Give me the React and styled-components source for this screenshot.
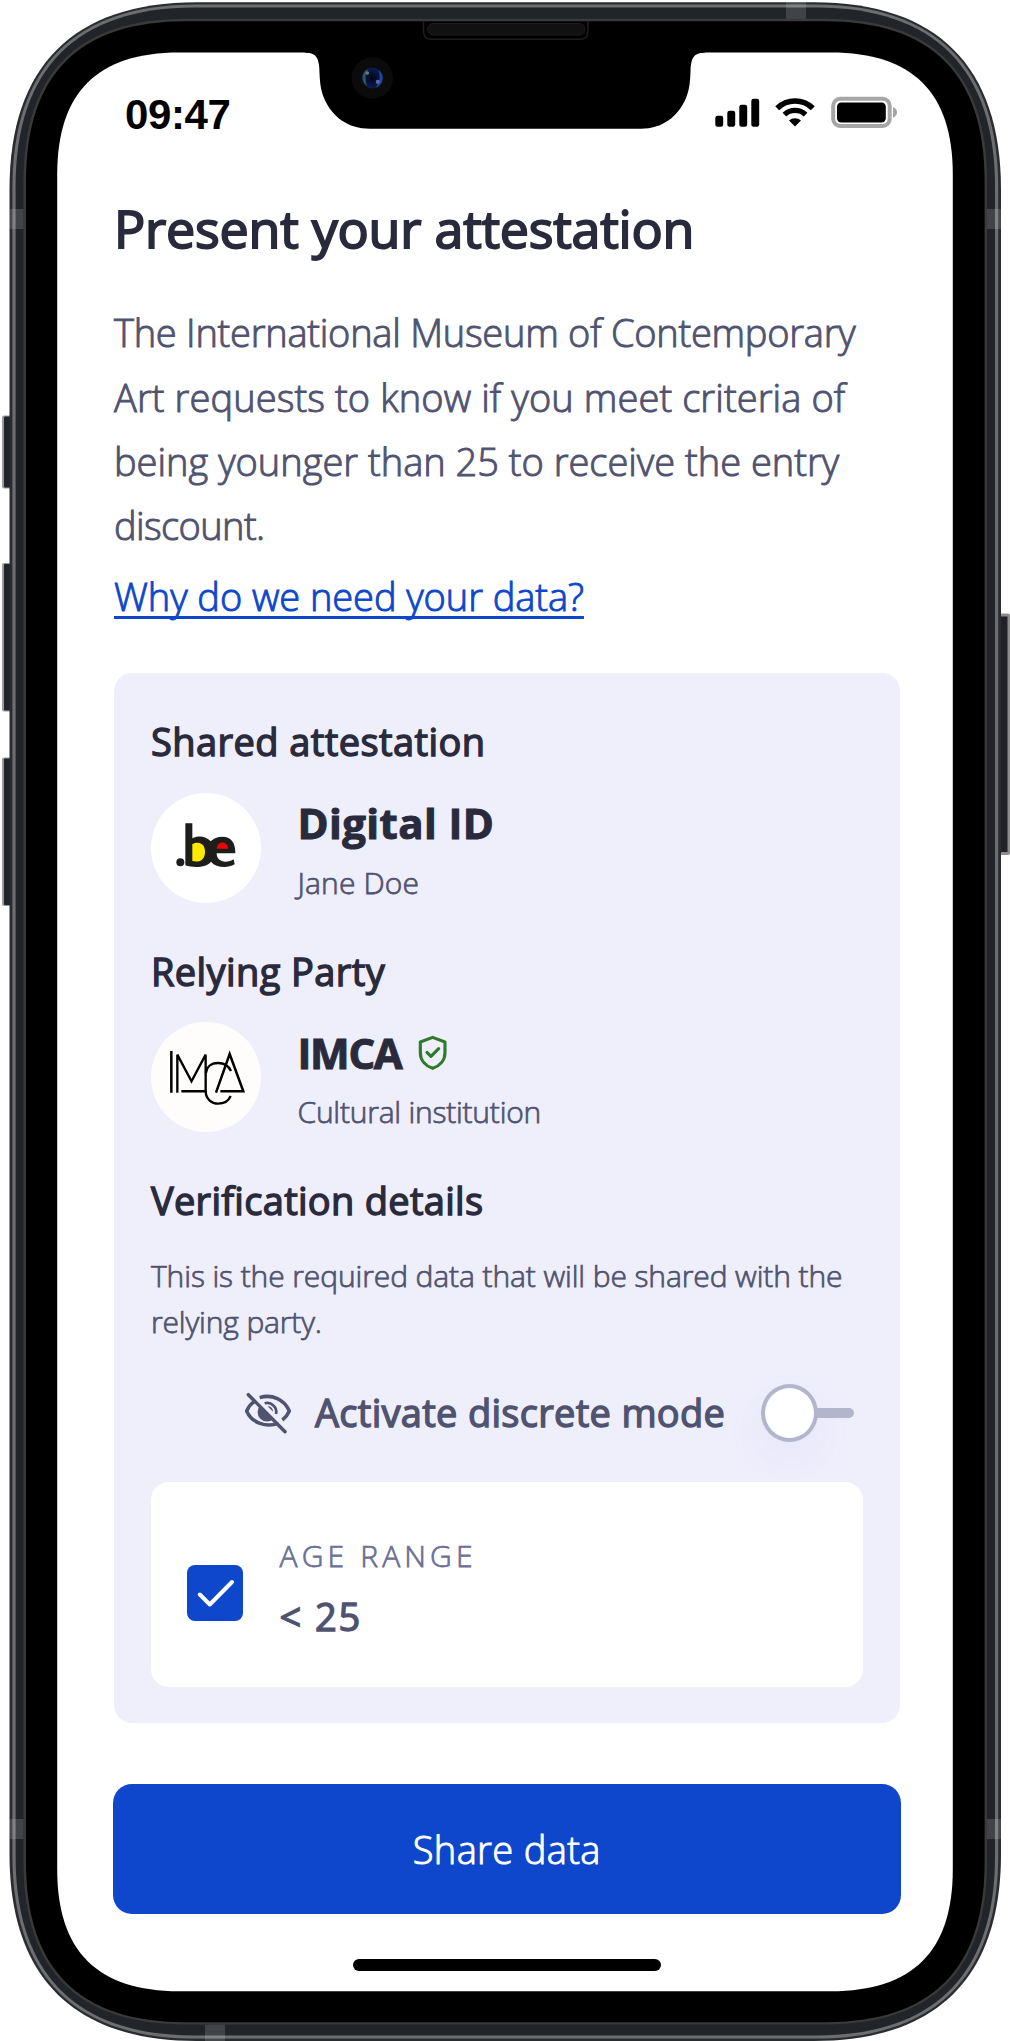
import React from "react";
import styled, { createGlobalStyle, css } from "styled-components";

const color = {
  ink: "#2a2a3d",
  text: "#505370",
  muted: "#6b7094",
  blue: "#0e47cb",
  panel: "#efeffc",
  line: "#b3b5cd",
  green: "#2f7a2c",
};

const GlobalStyle = createGlobalStyle`
  *, *::before, *::after { box-sizing: border-box; }
  body {
    margin: 0;
    background: #fff;
    font-family: "Open Sans", "Noto Sans", sans-serif;
  }
  h1, h2, h3, p { margin: 0; }
  svg { display: block; flex: none; }
`;

/* In-between weights: a light or regular face thickened by a hairline stroke. */
const book = css`
  font-weight: 300;
  -webkit-text-stroke: 0.025em currentColor;
`;

const medium = css`
  font-weight: 400;
  -webkit-text-stroke: 0.036em currentColor;
`;

const Phone = styled.main`
  position: relative;
  width: 1010px;
  height: 2041px;
  overflow: hidden;
`;

const BezelDrawing = styled.svg`
  position: absolute;
  inset: 0;
`;

const Screen = styled.div`
  position: relative;
  display: flex;
  flex-direction: column;
  width: 787px;
  margin-left: 114px;
  padding-top: 90px;
`;

const StatusBar = styled.div`
  display: flex;
  justify-content: space-between;
  height: 48px;
  padding: 0 2.5px 0 11px;
`;

const Clock = styled.span`
  padding-top: 1px;
  font: 700 42px/48px "Liberation Sans", Arial, sans-serif;
  letter-spacing: -0.4px;
  color: #000;
`;

const StatusIcons = styled.div`
  display: flex;
  gap: 15.5px;
  padding-top: 6px;
`;

const Title = styled.h1`
  margin-top: 58.3px;
  font-size: 52px;
  line-height: 64px;
  ${medium}
  letter-spacing: ${(p) => p.$track}px;
  white-space: nowrap;
  color: ${color.ink};
`;

const Intro = styled.p`
  margin-top: 40.1px;
  font-size: 38px;
  line-height: 64.3px;
  ${book}
  color: ${color.text};
`;

const Line = styled.span`
  display: block;
  white-space: nowrap;
  letter-spacing: ${(p) => p.$track}px;
`;

const HelpLink = styled.a`
  align-self: flex-start;
  margin-top: 6px;
  font-size: 38px;
  line-height: 64px;
  ${book}
  letter-spacing: ${(p) => p.$track}px;
  color: ${color.blue};
  text-decoration: underline;
  text-decoration-thickness: 2.5px;
  text-underline-offset: 5px;
  text-decoration-skip-ink: none;
  white-space: nowrap;
`;

const Panel = styled.section`
  display: flex;
  flex-direction: column;
  width: 786px;
  height: 1050px;
  margin-top: 45.4px;
  padding: 44.5px 37px 36.3px;
  border-radius: 18px;
  background: ${color.panel};
`;

const SectionTitle = styled.h2`
  font-size: 38px;
  line-height: 48px;
  ${medium}
  letter-spacing: ${(p) => p.$track}px;
  white-space: nowrap;
  color: ${color.ink};
`;

const Party = styled.div`
  display: flex;
  gap: 36.5px;
  height: 110px;
  margin: 27.4px 0 44px;
`;

const Avatar = styled.div`
  flex: none;
  width: 110px;
  height: 110px;
  border-radius: 50%;
  overflow: hidden;
  background: ${(p) => p.$bg};
`;

const PartyText = styled.div`
  display: flex;
  flex-direction: column;
  gap: 9.5px;
  padding-top: 2.5px;
`;

const PartyName = styled.h3`
  display: flex;
  align-items: center;
  gap: 15px;
  font-size: 42px;
  line-height: 56px;
  font-weight: 700;
  -webkit-text-stroke: 1px currentColor;
  letter-spacing: ${(p) => p.$track}px;
  white-space: nowrap;
  color: ${color.ink};
`;

const PartyRole = styled.p`
  font-size: 30px;
  line-height: 44px;
  ${book}
  letter-spacing: ${(p) => p.$track}px;
  white-space: nowrap;
  color: ${color.text};
`;

const Description = styled.p`
  margin-top: 28.8px;
  font-size: 30px;
  line-height: 45.5px;
  ${book}
  color: ${color.text};
`;

const ModeRow = styled.div`
  display: flex;
  align-items: center;
  justify-content: flex-end;
  height: 58px;
  margin: 40px 0 39.8px;
  padding-right: 9px;
`;

const ModeLabel = styled.span`
  width: 408.5px;
  margin: 0 37px 0 23px;
  padding-bottom: 3px;
  font-size: 38px;
  line-height: 48px;
  ${medium}
  letter-spacing: ${(p) => p.$track}px;
  white-space: nowrap;
  color: ${color.text};
`;

const Toggle = styled.div`
  display: flex;
  align-items: center;
  width: 93.5px;
`;

const Knob = styled.div`
  flex: none;
  width: 57px;
  height: 58px;
  border: 4px solid ${color.line};
  border-radius: 50%;
  background: #fff;
  box-shadow: 0 18px 46px 8px rgba(120, 125, 215, 0.06);
`;

const Track = styled.div`
  flex: 1;
  height: 10px;
  margin-left: -1px;
  border-radius: 0 5px 5px 0;
  background: ${color.line};
`;

const Claim = styled.div`
  position: relative;
  display: flex;
  align-items: flex-start;
  gap: 37px;
  height: 204.7px;
  padding: 52px 36px 0;
  border-radius: 18px;
  background: #fff;
`;

const Checkbox = styled.div`
  flex: none;
  width: 55.5px;
  height: 55.5px;
  margin-top: 31.5px;
  border-radius: 8px;
  background: ${color.blue};
`;

const ClaimText = styled.div`
  display: flex;
  flex-direction: column;
  gap: 14px;
`;

const ClaimLabel = styled.span`
  font-size: 30px;
  line-height: 44px;
  ${book}
  letter-spacing: 4.15px;
  white-space: nowrap;
  color: ${color.muted};
`;

const ClaimValue = styled.span`
  font-size: 38px;
  line-height: 48px;
  ${medium}
  letter-spacing: ${(p) => p.$track}px;
  color: ${color.text};
`;

const ShareButton = styled.button`
  width: 787.5px;
  height: 130.3px;
  margin: 61px 0 0 -1px;
  padding: 0;
  border: 0;
  border-radius: 19px;
  background: ${color.blue};
  font: 300 38px/48px "Open Sans", "Noto Sans", sans-serif;
  -webkit-text-stroke: 0.025em currentColor;
  letter-spacing: ${(p) => p.$track}px;
  color: #fff;
`;

const HomeIndicator = styled.div`
  width: 308px;
  height: 11.7px;
  margin: 45px auto 0 239px;
  border-radius: 6px;
  background: #000;
`;

/* Continuous-curvature rounded rectangle: `len` is how far each corner
   reaches along the sides, `ctl` the distance of its handles. */
function softRect(x0, y0, x1, y1, len, ctl) {
  return [
    `M${x0} ${y0 + len}`,
    `C${x0} ${y0 + ctl} ${x0 + ctl} ${y0} ${x0 + len} ${y0}`,
    `H${x1 - len}`,
    `C${x1 - ctl} ${y0} ${x1} ${y0 + ctl} ${x1} ${y0 + len}`,
    `V${y1 - len}`,
    `C${x1} ${y1 - ctl} ${x1 - ctl} ${y1} ${x1 - len} ${y1}`,
    `H${x0 + len}`,
    `C${x0 + ctl} ${y1} ${x0} ${y1 - ctl} ${x0} ${y1 - len}`,
    "Z",
  ].join(" ");
}

const bands = [
  [9.5, 209, 14, 20],
  [987, 209, 14, 20],
  [9.5, 1819, 14, 20],
  [987, 1819, 14, 20],
  [786, 2.3, 20, 16.7],
  [205, 2024.5, 20, 16.5],
];

const sideKeys = [
  [2, 415.5, 8, 73],
  [2, 563, 8, 148.5],
  [2, 757.5, 8, 148.5],
];

function Bezel() {
  return (
    <BezelDrawing width="1010" height="2041" viewBox="0 0 1010 2041" aria-hidden="true">
      <defs>
        <radialGradient id="lens" cx="0.5" cy="0.5" r="0.5">
          <stop offset="0" stopColor="#02040f" />
          <stop offset="0.55" stopColor="#07133c" />
          <stop offset="1" stopColor="#0c1c4c" />
        </radialGradient>
      </defs>
      {sideKeys.map(([x, y, w, h]) => (
        <g key={y}>
          <rect x={x} y={y} width={w + 4} height={h} rx="2" fill="#9b9b9b" />
          <rect x={x + 2} y={y + 1} width={w} height={h - 2} rx="1" fill="#212428" />
        </g>
      ))}
      <rect x="998" y="613.5" width="12" height="241.5" rx="2" fill="#8d8d8d" />
      <rect x="998" y="616.5" width="9.5" height="235.5" fill="#202126" />
      <path d={softRect(9.5, 2.3, 1001, 2041, 187, 64)} fill="#2b2c30" />
      <path d={softRect(12.4, 4.6, 998.2, 2038.6, 183, 62.5)} fill="#6d6e70" />
      <path d={softRect(15.6, 7.6, 995, 2035.4, 179, 61)} fill="#212529" />
      {bands.map(([x, y, w, h]) => (
        <rect key={`${x}-${y}`} x={x} y={y} width={w} height={h} fill="#fff" fillOpacity="0.14" />
      ))}
      <path d={softRect(23.5, 18.8, 987, 2024.5, 163, 54)} fill="#3b3a39" />
      <path d={softRect(26, 21.2, 984.6, 2022.3, 160, 53)} fill="#000" />
      <path d={softRect(57.2, 52.4, 952.8, 1991.3, 122, 40)} fill="#fff" />
      <path
        fill="#000"
        d="M300 50 L306 52.7 C317 53 318.5 59 319.3 68 C319.8 82 320.4 89 324 98 C332 117 348 128.7 370 128.7 H641 C662 128.7 678 117 686 98 C689.6 89 690.2 82 690.6 68 C691.4 59 693 53 704 52.7 L710 50 Z"
      />
      <path
        d="M423.5 21 V31 Q423.5 39.3 431 39.3 H580 Q588 39.3 588 31 V21"
        fill="none"
        stroke="#1d1d1d"
        strokeWidth="1.6"
      />
      <rect x="427.5" y="23.5" width="157.5" height="11.5" rx="5.7" fill="#111" stroke="#1c1c1c" />
      <circle cx="372.3" cy="78" r="20.7" fill="#0b0b0c" />
      <circle cx="372.3" cy="78" r="10.5" fill="url(#lens)" />
      <path d="M368 68.8 A10 10 0 0 0 367 86 Q363.5 77 368 68.8Z" fill="#2f5658" />
      <path d="M378.5 70 A10 10 0 0 1 376 87.5 Q382 79 378.5 70Z" fill="#2446a8" />
      <circle cx="367.3" cy="73" r="1.8" fill="#5a8578" />
      <circle cx="377.7" cy="81.8" r="2" fill="#6468a8" />
    </BezelDrawing>
  );
}

function SignalIcon() {
  return (
    <svg width="44.5" height="34" viewBox="0 0 44.5 34">
      <rect x="0.3" y="19.7" width="7.9" height="11" rx="2.2" />
      <rect x="12.3" y="14.7" width="7.9" height="16" rx="2.2" />
      <rect x="24.3" y="8.7" width="7.9" height="22" rx="2.2" />
      <rect x="36.3" y="2.7" width="7.9" height="28" rx="2.2" />
    </svg>
  );
}

function WifiIcon() {
  return (
    <svg width="40" height="34" viewBox="0 0 40 34" fill="none" stroke="#000">
      <path d="M2.2 12.2 A25.5 25.5 0 0 1 37.8 12.2" strokeWidth="5.6" />
      <path d="M9.4 18.6 A15.5 15.5 0 0 1 30.6 18.6" strokeWidth="5.2" />
      <path d="M14 24.6 A8.6 8.6 0 0 1 26 24.6 L20 30.4 Z" fill="#000" stroke="none" />
    </svg>
  );
}

function BatteryIcon() {
  return (
    <svg width="68" height="34" viewBox="0 0 68 34">
      <rect x="2.2" y="2.8" width="56.5" height="27.2" rx="7" fill="none" stroke="#a6a6a6" strokeWidth="4" />
      <rect x="6" y="6.4" width="48.8" height="20" rx="4.2" />
      <path d="M62 11 Q66 12.5 66 16.3 Q66 20 62 21.7 Z" fill="#a6a6a6" />
    </svg>
  );
}

function BeLogo() {
  return (
    <svg width="110" height="110" viewBox="-43 -52 330 330" role="img">
      <circle cx="45" cy="156" r="12" fill="#1d1d1b" />
      <path
        fill="#1d1d1b"
        d="M60 39 H81 V84 C100 74 123 79 136 93 C144 84 157 79 171 79 C196 79 211 96 210 129 H154 C154 145 165 154 180 154 C190 154 198 152 205 147 L208 162 C198 168 188 170 177 170 C160 170 146 165 137 154 C126 170 88 175 60 165 Z"
      />
      <path fill="#ffe900" d="M81 101 C104 90 119 103 119 124 C119 148 104 157 81 152 Z" />
      <path fill="#f30000" d="M154 115 C155 90 188 90 188 115 Z" />
    </svg>
  );
}

function ImcaLogo() {
  return (
    <svg width="110" height="110" viewBox="-43 -54 330 330" fill="none" stroke="#000" strokeWidth="7.5" role="img">
      <path d="M18 33 V158" />
      <path d="M36 158 V44 L78.500 124 L121 44 V155 C122 178 140 191 158 191 C178 191 190 182 196 168" strokeWidth="7" />
      <path d="M48 154 H122" />
      <path d="M197 93 C190 78 175 69 158 69 C135 69 123 83 121.500 100" strokeWidth="7" />
      <path d="M152 158 L193 42 L234 154 H165" />
    </svg>
  );
}

function VerifiedIcon() {
  return (
    <svg
      width="31.3"
      height="37.7"
      viewBox="952 1127 94 113"
      fill="none"
      stroke={color.green}
      strokeWidth="9.5"
      strokeLinecap="round"
      strokeLinejoin="round"
    >
      <path d="M999 1137 L1036 1151 V1183 C1036 1206 1020 1223 999 1230 C978 1223 962 1206 962 1183 V1151 Z" />
      <path d="M982 1182 L994 1194 L1017 1171" />
    </svg>
  );
}

function HiddenEyeIcon() {
  return (
    <svg
      width="48"
      height="44"
      viewBox="26 60 144 132"
      fill="none"
      stroke={color.text}
      strokeWidth="10.5"
      strokeLinejoin="round"
    >
      <path d="M73 80 C110 68 148 86 162 120 C157 132 150 140 141 147" />
      <path d="M57 91 C47 98 39 108 34 120 C50 157 92 170 130 157" />
      <path d="M88 97 A27 27 0 0 1 122 129" strokeWidth="8" />
      <path d="M97 106 A15 15 0 0 1 113 122 Z" fill={color.text} stroke="none" />
      <path d="M75 103 A28 28 0 0 0 115 143 Z" fill={color.text} stroke="none" />
      <path d="M39 71 L149 182" strokeLinecap="round" />
    </svg>
  );
}

function CheckIcon() {
  return (
    <svg width="55.5" height="55.5" viewBox="0 0 55.5 55.5" fill="none">
      <path
        d="M12.800 29.500 L22.800 39.500 L45 17"
        stroke="#fff"
        strokeWidth="4"
        strokeLinecap="round"
        strokeLinejoin="round"
      />
    </svg>
  );
}

const introLines = [
  ["The International Museum of Contemporary", -0.25],
  ["Art requests to know if you meet criteria of", 0.1],
  ["being younger than 25 to receive the entry", 0],
  ["discount.", -0.6],
];

export default function App() {
  return (
    <Phone>
      <GlobalStyle />
      <Bezel />
      <Screen>
        <StatusBar>
          <Clock>09:47</Clock>
          <StatusIcons>
            <SignalIcon />
            <WifiIcon />
            <BatteryIcon />
          </StatusIcons>
        </StatusBar>

        <Title $track={-0.24}>Present your attestation</Title>
        <Intro>
          {introLines.map(([text, track]) => (
            <Line key={text} $track={track}>{text}</Line>
          ))}
        </Intro>
        <HelpLink $track={-0.07}>Why do we need your data?</HelpLink>

        <Panel>
          <SectionTitle $track={0.43}>Shared attestation</SectionTitle>
          <Party>
            <Avatar $bg="#fff"><BeLogo /></Avatar>
            <PartyText>
              <PartyName $track={0.4}>Digital ID</PartyName>
              <PartyRole $track={0.15}>Jane Doe</PartyRole>
            </PartyText>
          </Party>

          <SectionTitle $track={0.4}>Relying Party</SectionTitle>
          <Party>
            <Avatar $bg="#fefdfb"><ImcaLogo /></Avatar>
            <PartyText>
              <PartyName $track={-1.3}>IMCA <VerifiedIcon /></PartyName>
              <PartyRole $track={-0.23}>Cultural institution</PartyRole>
            </PartyText>
          </Party>

          <SectionTitle $track={0.29}>Verification details</SectionTitle>
          <Description>
            <Line $track={-0.11}>This is the required data that will be shared with the</Line>
            <Line $track={-0.15}>relying party.</Line>
          </Description>

          <ModeRow>
            <HiddenEyeIcon />
            <ModeLabel $track={0.3}>Activate discrete mode</ModeLabel>
            <Toggle>
              <Knob />
              <Track />
            </Toggle>
          </ModeRow>

          <Claim>
            <Checkbox><CheckIcon /></Checkbox>
            <ClaimText>
              <ClaimLabel>AGE RANGE</ClaimLabel>
              <ClaimValue $track={1.9}>{"< 25"}</ClaimValue>
            </ClaimText>
          </Claim>
        </Panel>

        <ShareButton $track={0.35}>Share data</ShareButton>
        <HomeIndicator />
      </Screen>
    </Phone>
  );
}
